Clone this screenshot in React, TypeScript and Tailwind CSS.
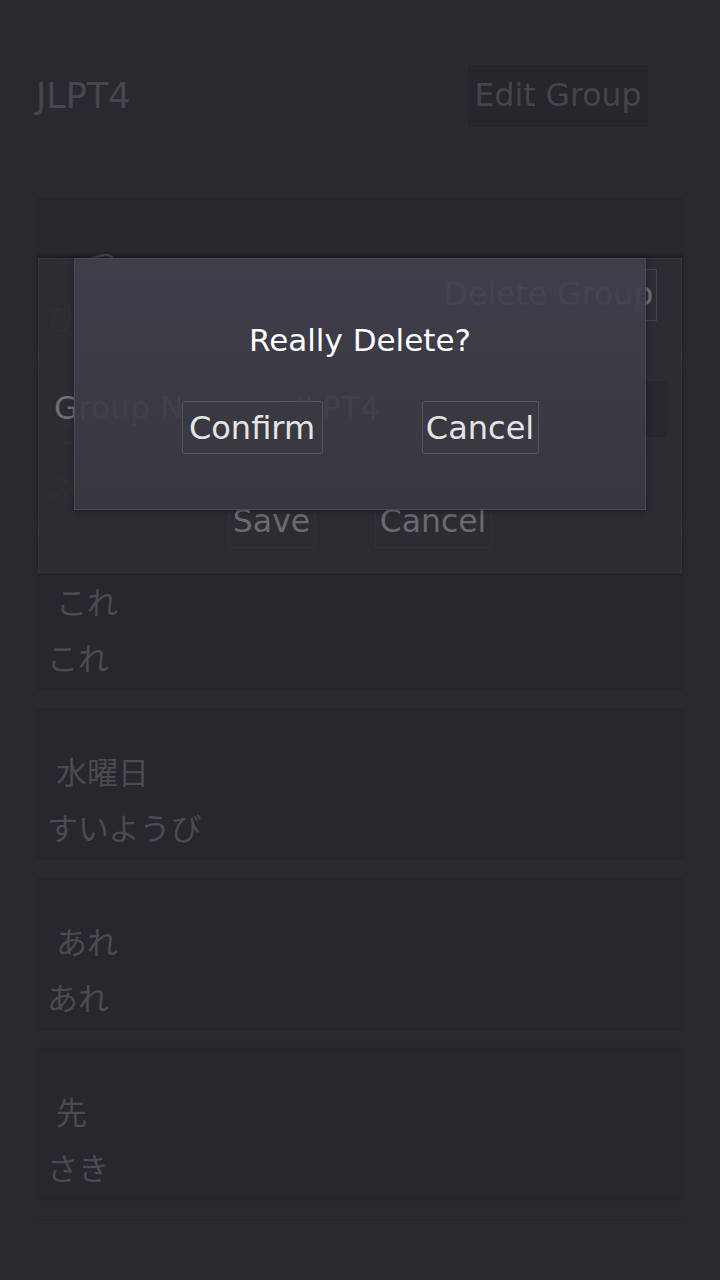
import React from "react";

const cards = [
  { word: "一つ", reading: "ひとつ" },
  { word: "二つ", reading: "ふたつ" },
  { word: "これ", reading: "これ" },
  { word: "水曜日", reading: "すいようび" },
  { word: "あれ", reading: "あれ" },
  { word: "先", reading: "さき" },
];

function Card({ word, reading }: { word: string; reading: string }) {
  return (
    <div className="h-[150px] shrink-0 bg-[#28272d] border border-[#26252b] shadow-[0_0_2px_rgba(0,0,0,0.2)] pt-[47px]">
      <div className="pl-[17px] h-[32px] leading-[32px] text-[31px] text-[#4b4a50] whitespace-nowrap">{word}</div>
      <div className="pl-[8px] mt-[24px] h-[32px] leading-[32px] text-[31px] text-[#4b4a50] whitespace-nowrap">{reading}</div>
    </div>
  );
}

export default function App() {
  return (
    <div className="relative w-[720px] h-[1280px] overflow-hidden bg-[#2a2930] font-['DejaVu_Sans','Noto_Sans_CJK_JP',sans-serif]">
      {/* page header */}
      <header className="flex items-start justify-between pl-[36px] pr-[71px] pt-[64px]">
        <div className="h-[64px] flex items-center text-[35px] text-[#47464d] leading-none">JLPT4</div>
        <div className="h-[64px] w-[182px] flex items-center justify-center bg-[#27262c] border border-[#2c2b31] text-[31.5px] text-[#45444b] leading-none">
          Edit Group
        </div>
      </header>

      {/* word cards */}
      <div className="mt-[71px] px-[38px] flex flex-col gap-[20px]">
        {cards.map((c, i) => (
          <Card key={i} word={c.word} reading={c.reading} />
        ))}
        <div className="h-[80px] border-t-2 border-[#27262c]" />
      </div>

      {/* edit group panel */}
      <div className="absolute left-[38px] top-[258px] w-[644px] h-[315px] bg-[rgba(46,45,51,0.92)] border border-[#36353b] shadow-[0_-2px_4px_rgba(0,0,0,0.35)] flex flex-col">
        <div className="flex justify-end pt-[10px] pr-[24px]">
          <div className="h-[52px] w-[217px] flex items-center justify-center border border-[#34465a] bg-[#2e2d34] text-[31.5px] text-[#6e6d75] leading-none whitespace-nowrap">
            Delete Group
          </div>
        </div>
        <div className="mt-[60px] flex items-center pl-[15px] pr-[14px]">
          <div className="text-[31.5px] text-[#6f6e74] leading-none whitespace-nowrap">Group Name</div>
          <div className="ml-auto h-[56px] w-[386px] bg-[#28272c] flex items-center pl-[14px] text-[31.5px] text-[#6f6e74] leading-none">
            JLPT4
          </div>
        </div>
        <div className="mt-[59px] flex justify-center gap-[60px]">
          <div className="h-[52px] w-[86px] flex items-center justify-center border border-[#333238] bg-[#2d2c32] text-[31.5px] text-[#6b6a70] leading-none">
            Save
          </div>
          <div className="h-[52px] w-[117px] flex items-center justify-center border border-[#333238] bg-[#2d2c32] text-[31.5px] text-[#6b6a70] leading-none">
            Cancel
          </div>
        </div>
      </div>

      {/* confirm dialog */}
      <div className="absolute left-[74px] top-[258px] w-[572px] h-[252px] bg-gradient-to-b from-[rgba(66,64,77,0.9)] to-[rgba(57,55,65,0.9)] border border-[#4a4953] shadow-[0_2px_6px_rgba(0,0,0,0.3)] flex flex-col items-center">
        <div className="mt-[66px] text-[31px] text-white leading-none whitespace-nowrap">Really Delete?</div>
        <div className="mt-[45px] flex gap-[99px]">
          <div className="h-[53px] w-[141px] flex items-center justify-center bg-[#3a3942] border border-[#55545d] rounded-[2px] text-[32px] text-[#e4e4e6] leading-none">
            Confirm
          </div>
          <div className="h-[53px] w-[117px] flex items-center justify-center bg-[#3a3942] border border-[#55545d] rounded-[2px] text-[32px] text-[#e4e4e6] leading-none">
            Cancel
          </div>
        </div>
      </div>
    </div>
  );
}
